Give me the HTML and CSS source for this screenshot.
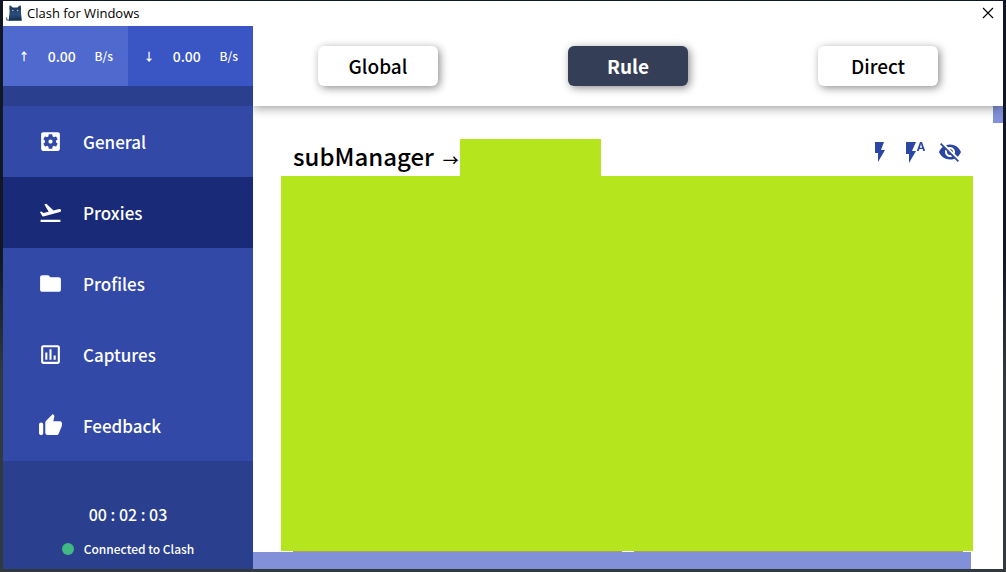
FILE: index.html
```html
<!DOCTYPE html>
<html lang="en">
<head>
<meta charset="utf-8">
<title>Clash for Windows</title>
<link rel="stylesheet" href="styles.css">
</head>
<body>
<div class="window">
  <header class="titlebar">
    <svg class="logo" viewBox="0 0 16 16" aria-hidden="true">
      <defs><linearGradient id="cat" x1="0" y1="0" x2="0" y2="1"><stop offset="0" stop-color="#1c355b"/><stop offset=".6" stop-color="#294d7c"/><stop offset="1" stop-color="#142a4c"/></linearGradient></defs>
      <path d="M4.200 15.200H1.800C.5 15.200.2 13.600 1 12.500" fill="none" stroke="#536b8d" stroke-width="1.200"/>
      <path d="M3.600.3C5 .9 6 1.800 6.600 2.600h4.800c.7-.9 1.700-1.800 3.200-2.300.5 2.200.6 4 .3 5.700.2 3.500.7 5.500.9 9.700H2.800C2.900 11.200 3.500 9.200 3.600 6 3.200 4.200 3.200 2.400 3.600.3z" fill="url(#cat)"/>
      <circle cx="6.800" cy="5.500" r=".7" fill="#b8cbe4"/><circle cx="11.600" cy="5.500" r=".7" fill="#b8cbe4"/>
    </svg>
    <h1 class="app-name">Clash for Windows</h1>
    <button class="close" type="button" aria-label="Close">
      <svg viewBox="0 0 12 12"><path d="M1 1l10 10M11 1L1 11" fill="none" stroke="#000" stroke-width="1.100"/></svg>
    </button>
  </header>

  <div class="body">
    <aside class="sidebar">
      <div class="traffic">
        <div class="rate rate-up"><span class="arrow">↑</span><span class="value">0.00</span><span class="unit">B/s</span></div>
        <div class="rate rate-down"><span class="arrow">↓</span><span class="value">0.00</span><span class="unit">B/s</span></div>
      </div>
      <nav class="menu">
        <a class="item" href="#general"><svg class="icon" viewBox="0 0 24 24"><path d="M12 10c-1.100 0-2 .9-2 2s.9 2 2 2 2-.9 2-2-.9-2-2-2zm7-7H5c-1.110 0-2 .9-2 2v14c0 1.100.89 2 2 2h14c1.110 0 2-.9 2-2V5c0-1.100-.89-2-2-2zm-1.750 9c0 .23-.02.46-.05.68l1.480 1.160c.13.11.17.3.08.45l-1.400 2.420c-.09.15-.27.21-.43.15l-1.740-.7c-.36.28-.76.51-1.180.69l-.26 1.850c-.03.17-.18.3-.35.3h-2.800c-.17 0-.32-.13-.35-.29l-.26-1.850c-.43-.18-.82-.41-1.180-.69l-1.740.7c-.16.06-.34 0-.43-.15l-1.400-2.420c-.09-.15-.05-.34.08-.45l1.480-1.160c-.03-.23-.05-.46-.05-.69 0-.23.02-.46.05-.68l-1.480-1.160c-.13-.11-.17-.3-.08-.45l1.400-2.420c.09-.15.27-.21.43-.15l1.740.7c.36-.28.76-.51 1.180-.69l.26-1.850c.03-.17.18-.3.35-.3h2.800c.17 0 .32.13.35.29l.26 1.850c.43.18.82.41 1.180.69l1.740-.7c.16-.06.34 0 .43.15l1.400 2.420c.09.15.05.34-.08.45l-1.480 1.160c.03.23.05.46.05.69z"/></svg>General</a>
        <a class="item item-active" href="#proxies" aria-current="page"><svg class="icon" viewBox="0 0 24 24"><path d="M2.500 19h19v2h-19zm19.570-9.360c-.21-.8-1.040-1.280-1.840-1.060L14.920 10l-6.900-6.430-1.930.51 4.140 7.170-4.970 1.330-1.970-1.540-1.450.39 1.820 3.160.77 1.330 1.600-.43 5.310-1.420 4.350-1.160L21 11.490c.81-.23 1.280-1.050 1.070-1.850z"/></svg>Proxies</a>
        <a class="item" href="#profiles"><svg class="icon" viewBox="0 0 24 24"><path d="M10 4H4c-1.100 0-1.990.9-1.990 2L2 18c0 1.100.9 2 2 2h16c1.100 0 2-.9 2-2V8c0-1.100-.9-2-2-2h-8l-2-2z"/></svg>Profiles</a>
        <a class="item" href="#captures"><svg class="icon" viewBox="0 0 24 24"><path d="M9 17H7v-7h2v7zm4 0h-2V7h2v10zm4 0h-2v-4h2v4zm2 2H5V5h14v14zm0-16H5c-1.100 0-2 .9-2 2v14c0 1.100.9 2 2 2h14c1.100 0 2-.9 2-2V5c0-1.100-.9-2-2-2z"/></svg>Captures</a>
        <a class="item" href="#feedback"><svg class="icon" viewBox="0 0 24 24"><path d="M3 9c1.100 0 2 .9 2 2v8.500c0 1-.9 1.700-2 1.700s-2-.7-2-1.700V11c0-1.100.9-2 2-2zm20 1c0-1.100-.9-2-2-2h-6.300l1-4.600v-.3c0-.4-.2-.8-.4-1.100L14.200 1 7.600 7.600C7.200 8 7 8.500 7 9v10c0 1.100.9 2 2 2h9c.8 0 1.500-.5 1.800-1.200l3-7.100c.1-.2.2-.5.2-.7v-2z"/></svg>Feedback</a>
      </nav>
      <div class="status">
        <div class="uptime">00 : 02 : 03</div>
        <div class="connection"><span class="dot"></span>Connected to Clash</div>
      </div>
    </aside>

    <main class="content">
      <div class="modes">
        <button class="mode" type="button">Global</button>
        <button class="mode mode-active" type="button" aria-pressed="true">Rule</button>
        <button class="mode" type="button">Direct</button>
      </div>
      <div class="scroll-area">
        <section class="group">
          <div class="group-head">
            <h2 class="group-name">subManager</h2>
            <span class="to">→</span>
            <span class="selected"></span>
            <div class="tools">
              <button class="tool" type="button" aria-label="Test latency"><svg viewBox="0 0 24 24"><path d="M7 2v11h3v9l7-12h-4l3-8z"/></svg></button>
              <button class="tool" type="button" aria-label="Sort by latency"><svg viewBox="0 0 24 24"><path d="M3 2v12h3v9l7-12H9l4-9zm16 0h-2l-3.200 9h1.900l.7-2h3.200l.7 2h1.900L19 2zm-2.150 5.650L18 4l1.150 3.650z"/></svg></button>
              <button class="tool" type="button" aria-label="Hide unavailable"><svg viewBox="0 0 24 24"><path d="M12 7c2.760 0 5 2.240 5 5 0 .65-.13 1.260-.36 1.830l2.920 2.920c1.510-1.260 2.700-2.890 3.430-4.750-1.730-4.390-6-7.500-11-7.500-1.400 0-2.740.25-3.980.7l2.160 2.160C10.740 7.130 11.350 7 12 7zM2 4.270l2.280 2.280.46.460C3.080 8.300 1.780 10.020 1 12c1.730 4.390 6 7.500 11 7.500 1.550 0 3.030-.3 4.380-.84l.42.42L19.730 22 21 20.730 3.270 3zM7.530 9.800l1.550 1.550c-.05.21-.08.43-.08.65 0 1.660 1.340 3 3 3 .22 0 .44-.03.65-.08l1.550 1.550c-.67.33-1.410.53-2.200.53-2.760 0-5-2.240-5-5 0-.79.2-1.530.53-2.200zm4.310-.78l3.150 3.150.02-.16c0-1.660-1.340-3-3-3z"/></svg></button>
            </div>
          </div>
          <div class="nodes"></div>
          <div class="next-row"><span></span><span></span></div>
        </section>
        <div class="track-y"><div class="thumb-y"></div></div>
        <div class="thumb-x"></div>
      </div>
    </main>
  </div>
</div>
</body>
</html>
```
FILE: styles.css
```css
* { box-sizing: border-box; }

body {
  margin: 0;
  height: 100vh;
  padding: 1px 3px 3px;
  background: linear-gradient(#101725 0, #101725 45%, #30393e 65%, #30393e 100%);
  font-family: "Noto Sans CJK SC", "Noto Sans", sans-serif;
  font-weight: 500;
  color: #000;
}

h1, h2 { margin: 0; font-weight: inherit; }

button {
  border: 0;
  padding: 0;
  background: none;
  font: inherit;
  color: inherit;
}

.window {
  display: flex;
  flex-direction: column;
  height: 100%;
  background: #fff;
}

.titlebar {
  display: flex;
  align-items: center;
  height: 25px;
  padding: 0 9px 1px 3px;
}

.logo { width: 16px; height: 16px; }

.app-name {
  flex: 1;
  margin-left: 5px;
  font: 400 13px/20px "Open Sans", sans-serif;
}

.close { display: flex; }
.close svg { width: 12px; height: 12px; }

.body { flex: 1; display: flex; min-height: 0; }

.sidebar {
  display: flex;
  flex-direction: column;
  width: 250px;
  background: #2a3f8e;
  color: #fff;
}

.traffic { display: flex; height: 60px; margin-bottom: 20px; }

.rate {
  flex: 1;
  display: flex;
  align-items: center;
  justify-content: space-between;
  padding: 0 15px 0 16px;
  line-height: 20px;
}
.rate-up { background: #5069ce; }
.rate-down { background: #3a55c4; }
.arrow { display: flex; justify-content: center; width: 10px; font-size: 11px; font-weight: 700; }
.value { font-size: 14px; }
.unit { font-size: 12px; }

.menu { background: #3249a7; }

.item {
  display: flex;
  align-items: center;
  height: 71px;
  padding-left: 35px;
  gap: 20px;
  color: inherit;
  font-size: 17px;
  text-decoration: none;
}
.item-active { background: #192b78; }
.icon { width: 25px; height: 25px; fill: #fff; }

.status {
  flex: 1;
  display: flex;
  flex-direction: column;
  align-items: center;
  justify-content: flex-end;
  gap: 13px;
  padding-bottom: 10px;
}
.uptime { font-size: 16px; line-height: 24px; }
.connection {
  display: flex;
  align-items: center;
  gap: 10px;
  font-size: 12px;
  line-height: 20px;
}
.dot { width: 12px; height: 12px; border-radius: 50%; background: #42b883; }

.content { flex: 1; display: flex; flex-direction: column; min-width: 0; }

.modes {
  position: relative;
  display: flex;
  align-items: center;
  justify-content: space-around;
  height: 80px;
  box-shadow: 0 2px 10px rgba(0, 0, 0, 0.4);
  clip-path: inset(0 0 -12px 0);
}
.mode {
  width: 120px;
  height: 40px;
  border-radius: 6px;
  background: #fff;
  box-shadow: 2px 2px 8px rgba(0, 0, 0, 0.45);
  font-size: 19px;
  line-height: 40px;
}
.mode-active { background: #343e56; color: #fff; font-weight: 700; }

.scroll-area {
  flex: 1;
  display: grid;
  grid-template-columns: 1fr 10px;
  grid-template-rows: 1fr 17px;
  min-height: 0;
}

.group {
  display: flex;
  flex-direction: column;
  padding: 33px 20px 0 28px;
}
.group-head { display: flex; height: 37px; padding-left: 12px; }
.group-name { font-size: 24px; line-height: 34px; }
.to { width: 26px; padding-left: 9px; font-size: 16px; line-height: 40px; }
.selected { width: 141px; background: #b5e61d; }

.tools { display: flex; gap: 11px; margin: 1px 11px 0 auto; height: 24px; }
.tool { width: 24px; height: 24px; }
.tool svg { display: block; width: 24px; height: 24px; fill: #2c46a3; }

.nodes { flex: 1; background: #b5e61d; }
.next-row { display: flex; gap: 12px; padding: 0 10px 0 12px; }
.next-row span { flex: 1; height: 1px; background: #a59c72; }

.thumb-y { height: 17px; background: #8290da; }
.thumb-x { margin-right: 22px; background: #8290da; }
```
